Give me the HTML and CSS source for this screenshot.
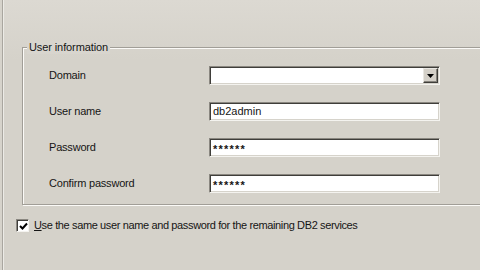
FILE: index.html
```html
<!DOCTYPE html>
<html>
<head>
<meta charset="utf-8">
<link rel="stylesheet" href="styles.css">
</head>
<body>
<div class="window">
  <div class="group">
    <span class="legend">User information</span>
    <div class="rows">
      <div class="label">Domain</div>
      <div class="field select"><span class="value"></span><span class="dropbtn"><svg width="7" height="4" viewBox="0 0 7 4"><path d="M0 0H7L3.5 4Z" fill="#000"/></svg></span></div>
      <div class="label">User name</div>
      <div class="field"><span class="value">db2admin</span></div>
      <div class="label">Password</div>
      <div class="field"><span class="value pw">******</span></div>
      <div class="label">Confirm password</div>
      <div class="field"><span class="value pw">******</span></div>
    </div>
  </div>
  <div class="check-row">
    <span class="checkbox"><svg width="9" height="9" viewBox="0 0 9 9"><path d="M1 4L3.5 6.5L8 1.5" fill="none" stroke="#000" stroke-width="2"/></svg></span>
    <span class="check-label"><u>U</u>se the same user name and password for the remaining DB2 services</span>
  </div>
</div>
</body>
</html>
```

FILE: styles.css
```css
html, body {
  margin: 0;
  padding: 0;
}
body {
  width: 480px;
  height: 270px;
  overflow: hidden;
  background: #d6d3cb;
  font-family: "Liberation Sans", Arial, sans-serif;
  font-size: 11px;
  color: #151515;
}
.window {
  height: 270px;
  margin-left: 2px;
  border-left: 1px solid #a9a69f;
  box-shadow: inset 1px 0 0 #ecebe6;
  background: linear-gradient(#dcd9d2, #d5d2ca 60px, #d5d2ca);
  padding-top: 47px;
  box-sizing: border-box;
}
.group {
  position: relative;
  margin-left: 19px;
  margin-right: -20px;
  border: 1px solid #a19e97;
  box-shadow: inset 1px 1px 0 #fbfaf7, 1px 1px 0 #fbfaf7;
  padding: 18px 0 11px 26px;
}
.legend {
  position: absolute;
  top: -7px;
  left: 4px;
  padding: 0 2px;
  background: #d8d5ce;
  line-height: 13px;
  letter-spacing: -0.1px;
}
.rows {
  display: grid;
  grid-template-columns: 160px 231px;
  grid-auto-rows: 19px;
  row-gap: 17px;
  align-items: center;
}
.label {
  line-height: 13px;
  letter-spacing: -0.2px;
}
.field {
  height: 19px;
  box-sizing: border-box;
  background: #fff;
  border-top: 1px solid #8a8780;
  border-left: 1px solid #8a8780;
  border-right: 1px solid #f4f3ef;
  border-bottom: 1px solid #f4f3ef;
  box-shadow: inset 1px 1px 0 #3f3e3a, inset -1px -1px 0 #d6d3cb;
  display: flex;
  align-items: center;
  padding: 0 2px 0 3px;
  position: relative;
}
.value {
  flex: 1;
  line-height: 13px;
}
.pw {
  font-weight: bold;
  letter-spacing: 1.2px;
  padding-top: 3px;
}
.dropbtn {
  width: 15px;
  height: 15px;
  box-sizing: border-box;
  background: #d4d0c8;
  border-top: 1px solid #e9e7e2;
  border-left: 1px solid #e9e7e2;
  border-right: 1px solid #3f3e3a;
  border-bottom: 1px solid #3f3e3a;
  box-shadow: inset -1px -1px 0 #85827b;
  display: flex;
  align-items: center;
  justify-content: center;
  margin-right: -1px;
}
.check-row {
  display: flex;
  align-items: center;
  gap: 5px;
  margin-top: 14px;
  margin-left: 13px;
}
.checkbox {
  width: 13px;
  height: 13px;
  box-sizing: border-box;
  background: #fff;
  border-top: 1px solid #8a8780;
  border-left: 1px solid #8a8780;
  border-right: 1px solid #f4f3ef;
  border-bottom: 1px solid #f4f3ef;
  box-shadow: inset 1px 1px 0 #3f3e3a;
  display: flex;
  align-items: center;
  justify-content: center;
  padding: 1px 0 0 1px;
}
.check-label {
  line-height: 13px;
  letter-spacing: -0.37px;
}
.check-label u {
  text-decoration: underline;
}
```
